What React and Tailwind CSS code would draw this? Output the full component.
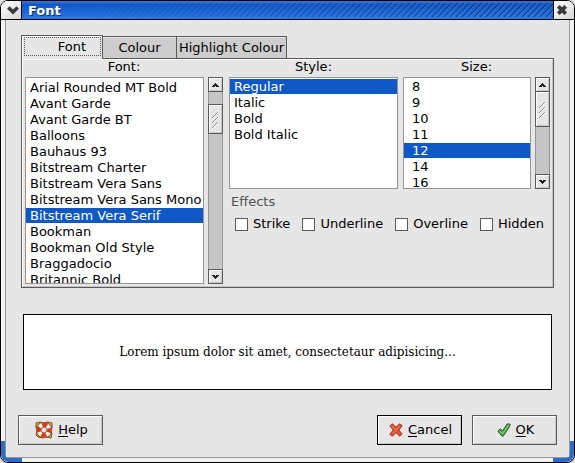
import { useRef, useState } from "react";

const FONTS = [
  "Arial Rounded MT Bold",
  "Avant Garde",
  "Avant Garde BT",
  "Balloons",
  "Bauhaus 93",
  "Bitstream Charter",
  "Bitstream Vera Sans",
  "Bitstream Vera Sans Mono",
  "Bitstream Vera Serif",
  "Bookman",
  "Bookman Old Style",
  "Braggadocio",
  "Britannic Bold",
];
const STYLES = ["Regular", "Italic", "Bold", "Bold Italic"];
const SIZES = ["8", "9", "10", "11", "12", "14", "16"];
const EFFECTS = ["Strike", "Underline", "Overline", "Hidden"];

const BEVEL = "border border-[#5a5a5a] shadow-[inset_1px_1px_#fff,inset_-1px_-1px_#c6c6c6]";

function Arrow({ down }) {
  return (
    <svg viewBox="0 0 7 4" className={down ? "h-1 w-[7px] rotate-180" : "h-1 w-[7px]"} fill="#1e1e1e" shapeRendering="crispEdges" aria-hidden="true">
      <path d="M3 0h1v1h1v1h1v1h1v1H4V3H3v1H0V3h1V2h1V1h1z" />
    </svg>
  );
}

function ScrollBar({ label, thumb, onScroll }) {
  const button = `flex h-[15px] w-full shrink-0 items-center justify-center bg-[#e6e6e6] ${BEVEL}`;
  return (
    <div className="flex w-[15px] shrink-0 flex-col bg-[#c6c6c6] shadow-[inset_1px_0_#969696,inset_-1px_0_#969696]">
      <button type="button" aria-label={`Scroll ${label} up`} onClick={() => onScroll(-16)} className={button}>
        <Arrow />
      </button>
      <div className="flex-1">
        <div className={`flex items-center justify-center bg-[#e6e6e6] ${BEVEL} ${thumb}`}>
          <svg viewBox="0 0 7 17" className="h-[17px] w-[7px]" aria-hidden="true">
            <path d="M1 7l6-6M1 12l6-6M1 17l6-6" stroke="#fff" />
            <path d="M0 7l6-6M0 12l6-6M0 17l6-6" stroke="#8c8c8c" />
          </svg>
        </div>
      </div>
      <button type="button" aria-label={`Scroll ${label} down`} onClick={() => onScroll(16)} className={button}>
        <Arrow down />
      </button>
    </div>
  );
}

function ListBox({ label, items, initial, box, row, thumb }) {
  const [selected, setSelected] = useState(initial);
  const list = useRef(null);
  return (
    <div className="flex min-w-0 flex-col">
      <span className="h-[18px] text-center leading-4">{label}:</span>
      <div className="flex gap-1">
        <ul
          ref={list}
          role="listbox"
          aria-label={label}
          tabIndex={0}
          className={`flex min-w-0 flex-1 flex-col gap-px overflow-hidden border border-[#969696] bg-white outline-none ${box}`}
        >
          {items.map((item) => (
            <li
              key={item}
              role="option"
              aria-selected={item === selected}
              onClick={() => setSelected(item)}
              className={`h-[15px] shrink-0 whitespace-nowrap leading-[15px] ${row} ${item === selected ? "bg-[#1058c6] text-white" : ""}`}
            >
              {item}
            </li>
          ))}
        </ul>
        {thumb && <ScrollBar label={label} thumb={thumb} onScroll={(dy) => list.current.scrollBy(0, dy)} />}
      </div>
    </div>
  );
}

function TitleTexture() {
  return (
    <svg className="absolute inset-0 h-full w-full" aria-hidden="true">
      <defs>
        <pattern id="stripes" width="6" height="6" patternUnits="userSpaceOnUse">
          <path d="M-1 7L7-1M-1 1l2-2M5 7l2-2" stroke="#0a3478" strokeWidth="1.2" />
          <path d="M0 7.500L7.500 0M0 1.500L1.500 0" stroke="#5a90dc" strokeWidth=".7" />
        </pattern>
        <linearGradient id="fade">
          <stop offset=".04" stopColor="#fff" stopOpacity="0" />
          <stop offset=".9" stopColor="#fff" stopOpacity=".85" />
        </linearGradient>
        <mask id="fade-mask">
          <rect width="100%" height="100%" fill="url(#fade)" />
        </mask>
      </defs>
      <rect y="2" width="100%" height="14" fill="url(#stripes)" mask="url(#fade-mask)" />
    </svg>
  );
}

function HelpIcon() {
  return (
    <svg viewBox="0 0 18 18" className="h-[18px] w-[18px]" aria-hidden="true">
      <path d="M1 2l4-1 4 1 4-1 4 1v5l-1 3 1 3-1 4-4-1-4 1-5-1-2-2 1-4-1-4z" fill="#cdb04a" stroke="#6b5517" />
      <circle cx="9" cy="9" r="5.3" fill="none" stroke="#7a2c14" strokeWidth="5.6" />
      <circle cx="9" cy="9" r="5.3" fill="none" stroke="#f6f0ea" strokeWidth="4.4" />
      <circle cx="9" cy="9" r="5.3" fill="none" stroke="#d83a14" strokeWidth="4.4" strokeDasharray="4.960 3.360" strokeDashoffset="2.480" />
      <circle cx="9" cy="9" r="2.8" fill="#e6e6e6" stroke="#8a5a48" strokeWidth=".6" />
    </svg>
  );
}

function CancelIcon() {
  return (
    <svg viewBox="0 0 14 14" className="h-[14px] w-[14px]" aria-hidden="true">
      <path d="M.8 3l2.700-2.200L7 4.300 10.500.8 13.200 2.800 9.800 7l3.400 4-2.500 2.200L7 9.700l-3.500 3.500L.8 11.300 4.300 7z" fill="#e8502c" stroke="#8c3a28" strokeLinejoin="round" />
      <path d="M2.500 3l4.500 4 4-4.500M3 11.500L7 7.500" fill="none" stroke="#f98a68" />
    </svg>
  );
}

function OkIcon() {
  return (
    <svg viewBox="0 0 14 14" className="h-[14px] w-[14px]" aria-hidden="true">
      <path d="M.8 8l2.700-2.300L5.500 8 10.300.8l3 .4-1.300 3.300L6.200 13.200H5z" fill="#3fa83c" stroke="#3a5a3a" strokeLinejoin="round" />
      <path d="M2.500 8l3 2.700L11.700 2" fill="none" stroke="#93e28a" />
    </svg>
  );
}

function ActionButton({ icon, text, primary }) {
  return (
    <button
      type="button"
      className={`flex h-[30px] w-[85px] items-center justify-center gap-[5px] border bg-[#e6e6e6] pl-0.5 shadow-[inset_1px_1px_#fff,inset_-1px_-1px_#c6c6c6] ${primary ? "border-black" : "border-[#5a5a5a]"}`}
    >
      {icon}
      <span>
        <span className="underline underline-offset-2">{text[0]}</span>
        {text.slice(1)}
      </span>
    </button>
  );
}

export default function App() {
  return (
    <div className="bg-[#dcdcdc] font-['DejaVu_Sans',sans-serif] text-[13px] leading-4 text-black">
      <div className="relative flex min-h-screen flex-col overflow-hidden rounded-lg border border-black bg-[#f2f2f2]">
        <header className="flex h-[19px] shrink-0 border-b border-black bg-linear-to-br from-white to-[#d8d4d8]">
          <button type="button" aria-label="Window menu" className="flex w-5 items-center justify-center bg-linear-to-br from-white to-[#d8d4d8] pl-1">
            <svg viewBox="0 0 12 9" className="h-[9px] w-3" aria-hidden="true">
              <path d="M1.300 1.500L6 6l4.700-4.500" fill="none" stroke="#3c3c3c" strokeWidth="3.600" />
            </svg>
          </button>
          <div className="relative flex flex-1 items-center border-x border-black bg-linear-to-b from-[#3a78d8] via-[#1058c6] via-20% to-[#2a78e6] pl-1.5">
            <TitleTexture />
            <h1 className="relative pt-px font-bold text-white [text-shadow:1px_1px_#0a2f70]">Font</h1>
          </div>
          <button type="button" aria-label="Close" className="flex w-5 items-center justify-center bg-linear-to-br from-white to-[#d8d4d8] pr-1">
            <svg viewBox="0 0 10 10" className="h-2.5 w-2.5" aria-hidden="true">
              <path d="M1.300 1.300l7.400 7.400M8.700 1.300L1.300 8.700" stroke="#3c3c3c" strokeWidth="3.800" />
            </svg>
          </button>
        </header>

        <main className="mx-1 mb-1 flex flex-1 flex-col border border-t-0 border-[#969696] bg-[#e6e6e6] px-3 pt-[15px] pb-3">
          <div role="tablist" className="ml-[3px] flex items-end">
            <button
              type="button"
              role="tab"
              aria-selected="true"
              className="relative -mb-px flex h-6 w-[82px] border border-b-0 border-[#5a5a5a] bg-[#e6e6e6] p-px shadow-[inset_1px_1px_#fff]"
            >
              <span className="mb-0.5 ml-px flex flex-1 items-center justify-end border border-dotted border-[#5a5a5a] pt-px pr-3.5">Font</span>
            </button>
            <button type="button" role="tab" aria-selected="false" className="h-[22px] w-[73px] border border-x-0 border-b-0 border-[#5a5a5a] bg-[#cdcdcd] shadow-[inset_0_1px_#e6e6e6]">
              Colour
            </button>
            <button type="button" role="tab" aria-selected="false" className="h-[22px] w-[111px] border border-b-0 border-[#5a5a5a] bg-[#cdcdcd] whitespace-nowrap shadow-[inset_0_1px_#e6e6e6]">
              Highlight Colour
            </button>
          </div>

          <section className="mx-[3px] grid grid-cols-[198fr_321fr] gap-1.5 border border-[#5a5a5a] px-[3px] pb-[3px] shadow-[inset_1px_1px_#fff,inset_-1px_-1px_#c6c6c6]">
            <ListBox label="Font" items={FONTS} initial="Bitstream Vera Serif" box="h-[207px] pt-0.5" row="pl-1" thumb="mt-3 h-[30px]" />
            <div className="min-w-0">
              <div className="grid grid-cols-[169fr_147fr] gap-[5px]">
                <ListBox label="Style" items={STYLES} initial="Regular" box="h-28 pt-px" row="pl-1" />
                <ListBox label="Size" items={SIZES} initial="12" box="h-28 pt-px" row="pl-2" thumb="-mt-px h-9" />
              </div>
              <fieldset className="mt-[5px]">
                <legend className="ml-0.5 text-[#505050]">Effects</legend>
                <div className="mt-1.5 ml-1.5 flex gap-3">
                  {EFFECTS.map((effect) => (
                    <label key={effect} className="flex items-center gap-[5px]">
                      <input type="checkbox" className="h-[13px] w-[13px] appearance-none border border-[#5a5a5a] bg-white checked:bg-[#1058c6]" />
                      {effect}
                    </label>
                  ))}
                </div>
              </fieldset>
            </div>
          </section>

          <div className="mx-[5px] mt-[26px] flex h-[76px] items-center justify-center border border-black bg-white font-['DejaVu_Serif',serif] text-xs">
            Lorem ipsum dolor sit amet, consectetaur adipisicing...
          </div>

          <footer className="mt-auto flex justify-between">
            <ActionButton icon={<HelpIcon />} text="Help" />
            <div className="flex gap-2.5">
              <ActionButton icon={<CancelIcon />} text="Cancel" primary />
              <ActionButton icon={<OkIcon />} text="OK" />
            </div>
          </footer>
        </main>

        <div className="pointer-events-none absolute bottom-0 left-0 h-[21px] w-[21px] rounded-bl-lg border-b-4 border-l-4 border-[#2e6ccc]" />
        <div className="pointer-events-none absolute right-0 bottom-0 h-[21px] w-[21px] rounded-br-lg border-r-4 border-b-4 border-[#2e6ccc]" />
      </div>
    </div>
  );
}
